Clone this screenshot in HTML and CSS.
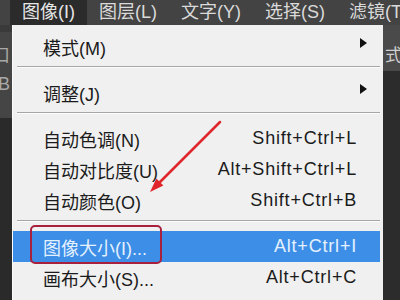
FILE: index.html
```html
<!DOCTYPE html>
<html lang="zh-CN">
<head>
  <meta charset="UTF-8">
  <title>图像菜单</title>
  <link rel="stylesheet" href="styles.css">
</head>
<body>
  <div class="menubar">
    <div class="menubar-item active">图像(I)</div>
    <div class="menubar-item">图层(L)</div>
    <div class="menubar-item">文字(Y)</div>
    <div class="menubar-item">选择(S)</div>
    <div class="menubar-item">滤镜(T)</div>
  </div>

  <div class="workspace">
    <div class="side-left">
      <div class="panel-strip">
        <span class="strip-glyph">口</span>
        <span class="strip-glyph">B</span>
      </div>
    </div>

    <div class="menu">
      <div class="menu-item has-sub"><span>模式(M)</span><span class="sub-arrow"></span></div>
      <div class="separator"></div>
      <div class="menu-item has-sub"><span>调整(J)</span><span class="sub-arrow"></span></div>
      <div class="separator"></div>
      <div class="menu-item"><span>自动色调(N)</span><span class="shortcut">Shift+Ctrl+L</span></div>
      <div class="menu-item"><span>自动对比度(U)</span><span class="shortcut">Alt+Shift+Ctrl+L</span></div>
      <div class="menu-item"><span>自动颜色(O)</span><span class="shortcut">Shift+Ctrl+B</span></div>
      <div class="separator"></div>
      <div class="menu-item selected">
        <span>图像大小(I)...</span><span class="shortcut">Alt+Ctrl+I</span>
        <div class="mark-box"></div>
      </div>
      <div class="menu-item"><span>画布大小(S)...</span><span class="shortcut">Alt+Ctrl+C</span></div>
      <div class="menu-item has-sub"><span>图像旋转(G)</span><span class="sub-arrow"></span></div>
    </div>

    <div class="side-right">
      <div class="options-strip">式:</div>
    </div>
  </div>

  <!-- 标注箭头 -->
  <svg class="annotation" width="400" height="300" viewBox="0 0 400 300">
    <line x1="220" y1="122" x2="158" y2="184" stroke="#e0262a" stroke-width="2.5" stroke-linecap="round"/>
    <polygon points="150,192 163.4,185.6 156.4,178.6" fill="#e0262a"/>
  </svg>
</body>
</html>
```

FILE: styles.css
```css
body {
  margin: 0;
  width: 400px;
  height: 300px;
  overflow: hidden;
  position: relative;
  background: #2a2a2a;
  font-family: "Liberation Sans", "Noto Sans CJK SC", sans-serif;
  font-size: 18px;
}

/* 顶部菜单栏 */
.menubar {
  display: flex;
  height: 25px;
  padding-left: 10px;
  background: #434343;
}

.menubar-item {
  padding: 0 12px;
  line-height: 25px;
  color: #dadada;
  white-space: nowrap;
}

.menubar-item.active {
  background: #2b2b2b;
  color: #e6e6e6;
}

.workspace {
  display: flex;
  height: 275px;
}

/* 左侧面板边缘 */
.side-left {
  width: 12px;
  overflow: hidden;
  background: #2a2a2a;
}

.panel-strip {
  height: 86px;
  background: #454545;
  border-top: 7px solid #3a3a3a;
  display: flex;
  flex-direction: column;
  align-items: flex-end;
  gap: 8px;
  padding-top: 14px;
  box-sizing: border-box;
  height: 93px;
}

.strip-glyph {
  color: #a8a8a8;
  font-size: 18px;
  line-height: 20px;
  margin-right: 2px;
}

/* 下拉菜单 */
.menu {
  width: 370px;
  padding-top: 6px;
  background: #f0f0f0;
  border-left: 1px solid #fbfbfb;
  color: #1b1b1b;
}

.menu-item {
  position: relative;
  display: flex;
  justify-content: space-between;
  align-items: center;
  height: 31px;
  margin-right: 3px;
  padding: 0 23px 0 30px;
  white-space: nowrap;
}

.menu-item.has-sub {
  padding-right: 13px;
}

.sub-arrow {
  width: 0;
  height: 0;
  border-top: 5px solid transparent;
  border-bottom: 5px solid transparent;
  border-left: 7px solid #111;
  margin-top: -8px;
}

.shortcut {
  letter-spacing: 0.8px;
}

.separator {
  height: 1px;
  margin: 4px 3px 9px 4px;
  background: #a6a6a6;
  border-bottom: 1px solid #fdfdfd;
}

.menu-item.selected {
  background: #3d8ee6;
  color: #e4f1ff;
}

/* 红色标注框 */
.mark-box {
  position: absolute;
  left: 17px;
  top: -6px;
  width: 128px;
  height: 35px;
  border: 2px solid #a8203c;
  border-radius: 5px;
}

/* 右侧选项栏边缘 */
.side-right {
  flex: 1;
  overflow: hidden;
  background: #2c2c2c;
}

.options-strip {
  height: 46px;
  background: #4a4a4a;
  color: #d0d0d0;
  padding: 22px 0 0 2px;
  box-sizing: border-box;
  white-space: nowrap;
  font-size: 17px;
  line-height: 18px;
}

.annotation {
  position: absolute;
  top: 0;
  left: 0;
}
```
